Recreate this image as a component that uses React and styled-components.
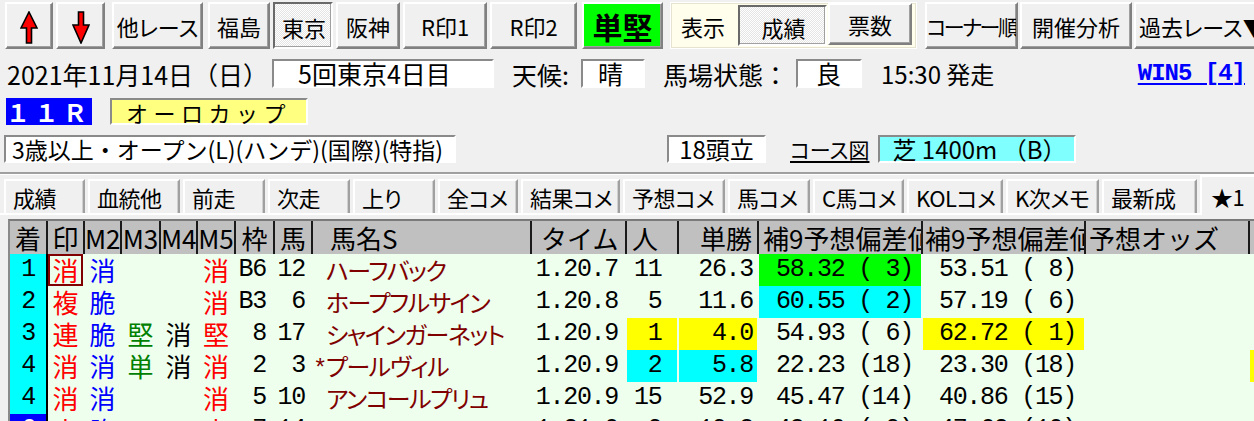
import React from "react";
import styled, { createGlobalStyle, css } from "styled-components";

const GlobalStyle = createGlobalStyle`
  html, body {
    margin: 0;
    padding: 0;
    background: #f0f0f0;
  }
  body {
    font-family: "Noto Sans CJK JP", "Noto Sans", sans-serif;
    color: #000;
  }
`;

const Screen = styled.div`
  width: 1254px;
  height: 421px;
  overflow: hidden;
  background: #f0f0f0;
  display: flex;
  flex-direction: column;
`;

const raised = css`
  border: 2px solid;
  border-color: #ffffff #808080 #808080 #ffffff;
  box-shadow: inset -1px -1px 0 #a0a0a0;
`;

const pressed = css`
  border: 2px solid;
  border-color: #696969 #ffffff #ffffff #696969;
  background: repeating-conic-gradient(#ffffff 0 25%, #e4e4e4 0 50%) 0 0 / 2px 2px;
  padding: 2px 0 0 2px;
`;

const sunken = css`
  border: 2px solid;
  border-color: #8a8a8a #ffffff #ffffff #8a8a8a;
`;

/* ---- toolbar ---- */

const Toolbar = styled.div`
  display: flex;
  height: 47px;
  padding: 2px 0 0 5px;
  font-feature-settings: "palt";
`;

const ToolButton = styled.div`
  box-sizing: border-box;
  flex: none;
  width: ${p => p.$w}px;
  margin-left: ${p => p.$ml || 0}px;
  display: flex;
  align-items: center;
  justify-content: ${p => p.$left ? "flex-start" : "center"};
  padding-left: ${p => p.$pl || 0}px;
  padding-top: ${p => p.$pt || 0}px;
  font-size: ${p => p.$fs || 22}px;
  font-weight: ${p => p.$bold ? 700 : 400};
  letter-spacing: ${p => p.$ls || 0}px;
  white-space: nowrap;
  overflow: hidden;
  background: ${p => p.$bg || "#f0f0f0"};
  ${raised}
  ${p => p.$pressed && pressed}
`;

const ModePanel = styled.div`
  box-sizing: border-box;
  flex: none;
  width: 247px;
  margin-left: 7px;
  display: flex;
  align-items: center;
  background: #fffdec;
  border: 1px solid #ffffff;
  box-shadow: inset 0 0 0 1px #e6e4d0;
`;

const ModeLabel = styled.span`
  width: 67px;
  padding-left: 10px;
  box-sizing: border-box;
  font-size: 22px;
`;

const ModeButton = styled.div`
  box-sizing: border-box;
  width: ${p => p.$w}px;
  height: ${p => p.$h}px;
  margin-left: ${p => p.$ml || 0}px;
  align-self: ${p => p.$self || "center"};
  display: flex;
  align-items: center;
  justify-content: center;
  font-size: 22px;
  background: #f0f0f0;
  ${raised}
  ${p => p.$pressed && pressed}
`;

/* ---- info rows ---- */

const InfoRow = styled.div`
  display: flex;
  align-items: center;
  height: ${p => p.$h}px;
  margin-top: ${p => p.$mt}px;
  padding-left: ${p => p.$pl || 0}px;
`;

const Label = styled.span`
  flex: none;
  box-sizing: border-box;
  width: ${p => p.$w ? p.$w + "px" : "auto"};
  margin-left: ${p => p.$ml || 0}px;
  font-size: ${p => p.$fs || 25}px;
  white-space: nowrap;
`;

const Field = styled.div`
  flex: none;
  box-sizing: border-box;
  width: ${p => p.$w}px;
  height: 100%;
  margin-left: ${p => p.$ml || 0}px;
  padding-left: ${p => p.$pl || 0}px;
  display: flex;
  align-items: center;
  justify-content: ${p => p.$center ? "center" : "flex-start"};
  background: ${p => p.$bg || "#ffffff"};
  font-size: ${p => p.$fs || 25}px;
  line-height: 1;
  letter-spacing: ${p => p.$ls || 0}px;
  white-space: nowrap;
  ${sunken}
`;

const RaceNo = styled.div`
  flex: none;
  box-sizing: border-box;
  width: 86px;
  height: 100%;
  padding-left: 0;
  display: flex;
  align-items: center;
  background: #0000ff;
  color: #ffffff;
  font-size: 24px;
  line-height: 1;
  font-weight: 700;
  letter-spacing: 4.5px;
`;

const Win5 = styled.span`
  margin-left: auto;
  margin-right: 9px;
  font-family: "Liberation Mono", monospace;
  font-weight: 700;
  font-size: 24px;
  letter-spacing: -1px;
  color: #0000ff;
  text-decoration: underline;
  text-decoration-thickness: 2px;
  text-underline-offset: 3px;
`;

const CourseLink = styled.span`
  margin-left: 24px;
  font-size: 21px;
  font-feature-settings: "palt";
  text-decoration: underline;
  text-decoration-thickness: 2px;
  text-underline-offset: 3px;
`;

const Separator = styled.div`
  margin-top: 9px;
  height: 2px;
  background: #a0a0a0;
  border-bottom: 1px solid #ffffff;
`;

/* ---- tabs ---- */

const TabBar = styled.div`
  display: flex;
  align-items: flex-end;
  gap: 3px;
  height: 38px;
  padding-left: 4px;
  border-bottom: 2px solid #ffffff;
  font-feature-settings: "palt";
`;

const Tab = styled.div`
  flex: none;
  box-sizing: border-box;
  width: ${p => p.$w}px;
  height: ${p => p.$active ? 40 : 34}px;
  margin-bottom: ${p => p.$active ? -2 : 0}px;
  padding-left: ${p => p.$active ? 9 : 7}px;
  display: flex;
  align-items: center;
  font-size: 22px;
  letter-spacing: -0.5px;
  white-space: nowrap;
  overflow: hidden;
  background: #f0f0f0;
  border-top: 2px solid #ffffff;
  border-left: 2px solid #ffffff;
  border-right: 2px solid #a0a0a0;
  box-shadow: inset -1px 0 0 #d0d0d0;
  position: relative;
`;

/* ---- grid ---- */

const COLS = "38px 37px 37px 39px 37px 38px 39px 38px 219px 95px 52px 80px 164px 163px 164px 40px";

const Grid = styled.div`
  flex: 1;
  margin: 4px 0 0 8px;
  border-top: 2px solid #7a7a7a;
  border-left: 2px solid #8a8a8a;
  background: #eeffee;
  overflow: hidden;
`;

const HeadRow = styled.div`
  display: grid;
  grid-template-columns: ${COLS};
  height: 33px;
  background: #c0c0c0;
`;

const HeadCell = styled.div`
  box-sizing: border-box;
  border-right: ${p => p.$last ? "none" : "2px solid #1a1a1a"};
  text-align: ${p => p.$align || "center"};
  padding-left: ${p => p.$pl || 0}px;
  padding-right: ${p => p.$pr || 0}px;
  font-size: 26px;
  line-height: 33px;
  white-space: nowrap;
  overflow: hidden;
`;

const BodyRow = styled.div`
  display: grid;
  grid-template-columns: ${COLS};
  height: 32px;
`;

const Cell = styled.div`
  box-sizing: border-box;
  border-right: 2px solid ${p => p.$rule ? "#000000" : "transparent"};
  background: ${p => p.$bg || "transparent"};
  background-clip: padding-box;
  color: ${p => p.$color || "#000000"};
  text-align: ${p => p.$align || "left"};
  padding-left: ${p => p.$pl || 0}px;
  padding-right: ${p => p.$pr || 0}px;
  line-height: 32px;
  white-space: pre;
  overflow: hidden;
  ${p => p.$mono ? css`
    font-family: "Liberation Mono", monospace;
    font-size: 25px;
    letter-spacing: -1.3px;
  ` : css`
    font-size: 26px;
  `}
  ${p => p.$name && css`
    font-size: 24px;
    font-feature-settings: "palt";
    letter-spacing: -1.5px;
  `}
  ${p => p.$boxed && css`
    box-shadow: inset 0 0 0 2px #800000;
  `}
`;

const NameMark = styled.span`
  display: inline-block;
  width: 13px;
  text-align: center;
  font-family: "Liberation Mono", monospace;
  font-size: 24px;
  letter-spacing: 0;
`;

const ArrowUp = () => (
  <svg width="18" height="33" viewBox="0 0 18 33">
    <path d="M9 1 L17 17 L11.5 17 L11.5 32 L6.5 32 L6.5 17 L1 17 Z" fill="#ff0000" stroke="#000" strokeWidth="1.6" />
  </svg>
);

const ArrowDown = () => (
  <svg width="18" height="33" viewBox="0 0 18 33">
    <path d="M6.5 1 L11.5 1 L11.5 14 L17 14 L9 32 L1 14 L6.5 14 Z" fill="#ff0000" stroke="#000" strokeWidth="1.6" />
  </svg>
);

const RED = "#ff0000";
const BLUE = "#0000ff";
const GREEN = "#008000";
const BLACK = "#000000";

const header = [
  { t: "着" }, { t: "印" }, { t: "M2" }, { t: "M3" }, { t: "M4" }, { t: "M5" },
  { t: "枠" }, { t: "馬" },
  { t: "馬名S", a: "left", pl: 17 },
  { t: "タイム", a: "left", pl: 9 },
  { t: "人", a: "left", pl: 5 },
  { t: "単勝", a: "right", pr: 5 },
  { t: "補9予想偏差値", a: "left", pl: 4 },
  { t: "補9予想偏差値", a: "left", pl: 2 },
  { t: "予想オッズ", a: "left", pl: 3 },
  { t: "", last: true },
];

const rows = [
  {
    rank: "1", rankBg: "#00ffff",
    marks: [["消", RED], ["消", BLUE], ["", BLACK], ["", BLACK], ["消", RED]], boxed: true,
    waku: "B6", uma: "12", mark: " ", name: "ハーフバック",
    time: "1.20.7", ninki: "11", tan: "26.3",
    d1: "58.32 ( 3)", d1Bg: "#00ff00", d2: "53.51 ( 8)",
  },
  {
    rank: "2", rankBg: "#00ffff",
    marks: [["複", RED], ["脆", BLUE], ["", BLACK], ["", BLACK], ["消", RED]],
    waku: "B3", uma: "6", mark: " ", name: "ホープフルサイン",
    time: "1.20.8", ninki: "5", tan: "11.6",
    d1: "60.55 ( 2)", d1Bg: "#00ffff", d2: "57.19 ( 6)",
  },
  {
    rank: "3", rankBg: "#00ffff",
    marks: [["連", RED], ["脆", BLUE], ["堅", GREEN], ["消", BLACK], ["堅", RED]],
    waku: "8", uma: "17", mark: " ", name: "シャインガーネット",
    time: "1.20.9", ninki: "1", ninkiBg: "#ffff00", tan: "4.0", tanBg: "#ffff00",
    d1: "54.93 ( 6)", d2: "62.72 ( 1)", d2Bg: "#ffff00",
  },
  {
    rank: "4", rankBg: "#00ffff",
    marks: [["消", RED], ["消", BLUE], ["単", GREEN], ["消", BLACK], ["消", RED]],
    waku: "2", uma: "3", mark: "*", name: "プールヴィル",
    time: "1.20.9", ninki: "2", ninkiBg: "#00ffff", tan: "5.8", tanBg: "#00ffff",
    d1: "22.23 (18)", d2: "23.30 (18)", extraBg: "#ffff00",
  },
  {
    rank: "4", rankBg: "#00ffff",
    marks: [["消", RED], ["消", BLUE], ["", BLACK], ["", BLACK], ["消", RED]],
    waku: "5", uma: "10", mark: " ", name: "アンコールプリュ",
    time: "1.20.9", ninki: "15", tan: "52.9",
    d1: "45.47 (14)", d2: "40.86 (15)",
  },
  {
    rank: "6", rankBg: "#0000ff", rankColor: "#ffffff",
    marks: [["穴", RED], ["脆", BLUE], ["", BLACK], ["", BLACK], ["穴", RED]],
    waku: "7", uma: "14", mark: " ", name: "サトノアイ",
    time: "1.21.0", ninki: "9", tan: "19.8",
    d1: "48.10 ( 9)", d2: "47.62 (10)",
  },
];

const tabs = [
  ["成績", 81], ["血統他", 92], ["前走", 82], ["次走", 82], ["上り", 82],
  ["全コメ", 80], ["結果コメ", 99], ["予想コメ", 102], ["馬コメ", 82],
  ["C馬コメ", 91], ["KOLコメ", 96], ["K次メモ", 93], ["最新成", 95],
];

export default function App() {
  return (
    <Screen>
      <GlobalStyle />
      <Toolbar>
        <ToolButton $w={48} $pt={4}><ArrowUp /></ToolButton>
        <ToolButton $w={49} $ml={3} $pt={4}><ArrowDown /></ToolButton>
        <ToolButton $w={91} $ml={7}>他レース</ToolButton>
        <ToolButton $w={62} $ml={5}>福島</ToolButton>
        <ToolButton $w={60} $ml={3} $pressed>東京</ToolButton>
        <ToolButton $w={64} $ml={3}>阪神</ToolButton>
        <ToolButton $w={84} $ml={3}>R印1</ToolButton>
        <ToolButton $w={87} $ml={3}>R印2</ToolButton>
        <ToolButton $w={81} $ml={5} $bg="#00ff00" $fs={30} $bold>単堅</ToolButton>
        <ModePanel>
          <ModeLabel>表示</ModeLabel>
          <ModeButton $w={89} $h={41} $pressed>成績</ModeButton>
          <ModeButton $w={84} $h={42} $ml={1} $self="flex-start">票数</ModeButton>
        </ModePanel>
        <ToolButton $w={93} $ml={8} $fs={21} $ls={-2.5}>コーナー順</ToolButton>
        <ToolButton $w={112} $ml={2}>開催分析</ToolButton>
        <ToolButton $w={130} $ml={2} $left $pl={3}>過去レース▼</ToolButton>
      </Toolbar>

      <InfoRow $h={29} $mt={10} $pl={7}>
        <Label $w={265}>2021年11月14日（日）</Label>
        <Field $w={222} $pl={24}>5回東京4日目</Field>
        <Label $w={69} $ml={18}>天候:</Label>
        <Field $w={64} $pl={15}>晴</Field>
        <Label $w={133} $ml={18}>馬場状態：</Label>
        <Field $w={66} $pl={18}>良</Field>
        <Label $ml={19} $fs={24}>15:30 発走</Label>
        <Win5>WIN5 [4]</Win5>
      </InfoRow>

      <InfoRow $h={27} $mt={10} $pl={6}>
        <RaceNo>１１Ｒ</RaceNo>
        <Field $w={198} $ml={18} $pl={14} $bg="#ffff80" $fs={22} $ls={5.5}>オーロカップ</Field>
      </InfoRow>

      <InfoRow $h={28} $mt={10} $pl={4}>
        <Field $w={452} $pl={6} $fs={23}>3歳以上・オープン(L)(ハンデ)(国際)(特指)</Field>
        <Field $w={99} $ml={211} $center $fs={24}>18頭立</Field>
        <CourseLink>コース図</CourseLink>
        <Field $w={198} $ml={9} $pl={12} $fs={24} $bg="#80ffff">芝 1400m （B）</Field>
      </InfoRow>

      <Separator />

      <TabBar>
        {tabs.map(([t, w]) => (
          <Tab key={t} $w={w}>{t}</Tab>
        ))}
        <Tab $w={60} $active>★1</Tab>
      </TabBar>

      <Grid>
        <HeadRow>
          {header.map((h, i) => (
            <HeadCell key={i} $align={h.a} $pl={h.pl} $pr={h.pr} $last={h.last}>{h.t}</HeadCell>
          ))}
        </HeadRow>
        {rows.map((r, i) => (
          <BodyRow key={i}>
            <Cell $rule $bg={r.rankBg} $color={r.rankColor} $align="center" $mono>{r.rank}</Cell>
            {r.marks.map(([m, c], j) => (
              <Cell key={j} $align="center" $color={c} $boxed={j === 0 && r.boxed}>{m}</Cell>
            ))}
            <Cell $align="right" $pr={7} $mono>{r.waku}</Cell>
            <Cell $align="right" $pr={6} $mono>{r.uma}</Cell>
            <Cell $name $color="#800000"><NameMark>{r.mark}</NameMark>{r.name}</Cell>
            <Cell $align="right" $pr={7} $mono>{r.time}</Cell>
            <Cell $pl={7} $mono $bg={r.ninkiBg}>{r.ninki.padStart(2, " ")}</Cell>
            <Cell $align="right" $pr={4} $mono $bg={r.tanBg}>{r.tan}</Cell>
            <Cell $align="right" $pr={8} $mono $bg={r.d1Bg}>{r.d1}</Cell>
            <Cell $align="right" $pr={8} $mono $bg={r.d2Bg}>{r.d2}</Cell>
            <Cell />
            <Cell $bg={r.extraBg} />
          </BodyRow>
        ))}
      </Grid>
    </Screen>
  );
}
